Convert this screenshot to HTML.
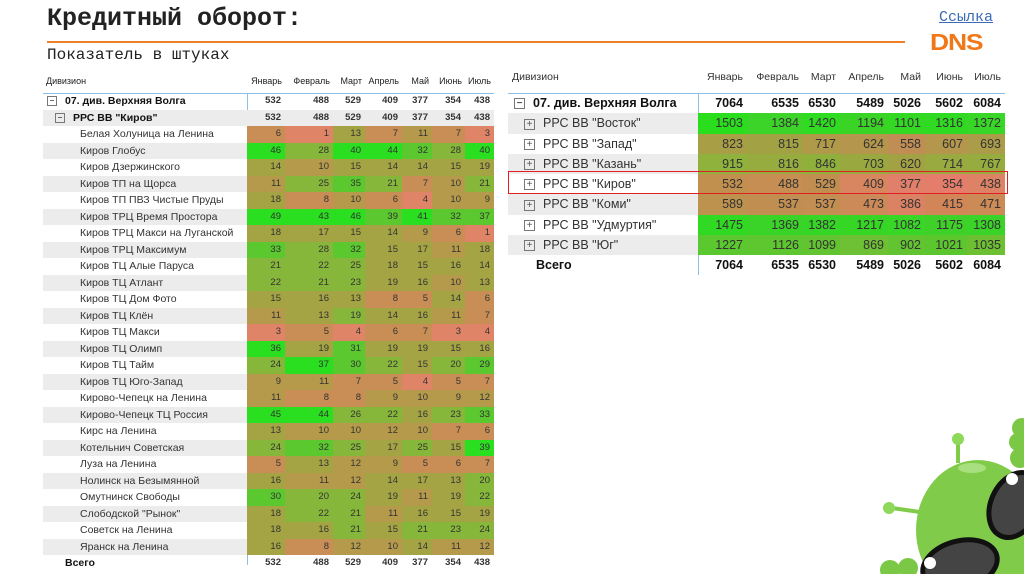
<!DOCTYPE html>
<html><head><meta charset="utf-8"><style>
body{margin:0;width:1024px;height:574px;background:#fff;position:relative;overflow:hidden;font-family:"Liberation Sans",sans-serif;}
.t1{position:absolute;left:47px;top:4px;font:bold 25px "Liberation Mono",monospace;color:#222;}
.t2{position:absolute;left:47px;top:46px;font:16px "Liberation Mono",monospace;color:#222;}
.ol{position:absolute;left:47px;top:41px;width:858px;height:2px;background:#f08028;}
.lnk{position:absolute;left:939px;top:9px;font:15px "Liberation Mono",monospace;color:#3a6ab8;text-decoration:underline;}
.dns{position:absolute;left:930px;top:29px;font:900 23px "Liberation Sans",sans-serif;color:#f07818;letter-spacing:-1px;transform:scaleX(1.15);transform-origin:left;}
table{border-collapse:collapse;position:absolute;table-layout:fixed;}
td{padding:0;white-space:nowrap;overflow:hidden;}
#L{left:43px;top:70px;font-size:10.5px;color:#333;}
#L td{height:16.5px;line-height:16.5px;}
#L td.n{text-align:right;padding-right:4px;color:#333;font-size:9.5px}
#L tr.h td{height:23px;font-size:9px;color:#222;text-align:right;padding-right:3px;line-height:23px}
#L tr.h td:first-child{text-align:left;padding-left:3px}
.g td:first-child{background:#ececec}
.b td{font-weight:bold;color:#111}
.a{background:#2ade20}.bb{background:#5ac82e}.c{background:#86b63a}.d{background:#a4a444}.e{background:#b69a4c}.f{background:#c88e56}.gg{background:#e08468}
#R{left:508px;top:62px;font-size:12.5px;color:#333;}
#R td{height:20.3px;line-height:20.3px;}
#R tr.h td{height:31px;font-size:10.5px;text-align:right;padding-right:4px}
#R tr.h td:first-child{text-align:left;padding-left:4px}
#R td.n{text-align:right;padding-right:4px}
.bx{display:inline-block;width:8px;height:8px;border:1px solid #777;font-size:8px;line-height:8px;text-align:center;vertical-align:middle;margin-right:8px;color:#555}
#R .bx{width:9px;height:9px;line-height:9px;font-size:10px}
</style></head><body>
<div class="t1">Кредитный оборот:</div>
<div class="ol"></div>
<div class="t2">Показатель в штуках</div>
<div class="lnk">Ссылка</div>
<div class="dns">DNS</div>

<div style="position:absolute;left:247px;top:93px;width:1px;height:472px;background:#8cc0e8"></div>
<div style="position:absolute;left:43px;top:93px;width:451px;height:1px;background:#8cc0e8"></div>
<table id="L">
<colgroup><col style="width:204px"><col style="width:38px"><col style="width:48px"><col style="width:32px"><col style="width:37px"><col style="width:30px"><col style="width:33px"><col style="width:29px"></colgroup>
<tr class="h"><td>Дивизион</td><td>Январь</td><td>Февраль</td><td>Март</td><td>Апрель</td><td>Май</td><td>Июнь</td><td>Июль</td></tr>
<tr class="b"><td style="padding-left:4px"><span class="bx">−</span>07. див. Верхняя Волга</td><td class="n">532</td><td class="n">488</td><td class="n">529</td><td class="n">409</td><td class="n">377</td><td class="n">354</td><td class="n">438</td></tr>
<tr class="b g" style="background:#ececec"><td style="padding-left:12px"><span class="bx">−</span>РРС ВВ "Киров"</td><td class="n">532</td><td class="n">488</td><td class="n">529</td><td class="n">409</td><td class="n">377</td><td class="n">354</td><td class="n">438</td></tr>
<tr><td style="padding-left:37px">Белая Холуница на Ленина</td><td class="n f">6</td><td class="n gg">1</td><td class="n d">13</td><td class="n f">7</td><td class="n e">11</td><td class="n f">7</td><td class="n gg">3</td></tr>
<tr class="g"><td style="padding-left:37px">Киров Глобус</td><td class="n a">46</td><td class="n c">28</td><td class="n a">40</td><td class="n a">44</td><td class="n bb">32</td><td class="n c">28</td><td class="n a">40</td></tr>
<tr><td style="padding-left:37px">Киров Дзержинского</td><td class="n d">14</td><td class="n e">10</td><td class="n d">15</td><td class="n d">14</td><td class="n d">14</td><td class="n d">15</td><td class="n d">19</td></tr>
<tr class="g"><td style="padding-left:37px">Киров ТП на Щорса</td><td class="n e">11</td><td class="n c">25</td><td class="n bb">35</td><td class="n c">21</td><td class="n f">7</td><td class="n e">10</td><td class="n c">21</td></tr>
<tr><td style="padding-left:37px">Киров ТП ПВЗ Чистые Пруды</td><td class="n d">18</td><td class="n f">8</td><td class="n e">10</td><td class="n f">6</td><td class="n gg">4</td><td class="n e">10</td><td class="n e">9</td></tr>
<tr class="g"><td style="padding-left:37px">Киров ТРЦ Время Простора</td><td class="n a">49</td><td class="n a">43</td><td class="n a">46</td><td class="n bb">39</td><td class="n a">41</td><td class="n bb">32</td><td class="n bb">37</td></tr>
<tr><td style="padding-left:37px">Киров ТРЦ Макси на Луганской</td><td class="n d">18</td><td class="n d">17</td><td class="n d">15</td><td class="n d">14</td><td class="n e">9</td><td class="n f">6</td><td class="n gg">1</td></tr>
<tr class="g"><td style="padding-left:37px">Киров ТРЦ Максимум</td><td class="n bb">33</td><td class="n c">28</td><td class="n bb">32</td><td class="n d">15</td><td class="n d">17</td><td class="n e">11</td><td class="n d">18</td></tr>
<tr><td style="padding-left:37px">Киров ТЦ Алые Паруса</td><td class="n c">21</td><td class="n c">22</td><td class="n c">25</td><td class="n d">18</td><td class="n d">15</td><td class="n d">16</td><td class="n d">14</td></tr>
<tr class="g"><td style="padding-left:37px">Киров ТЦ Атлант</td><td class="n c">22</td><td class="n c">21</td><td class="n c">23</td><td class="n d">19</td><td class="n d">16</td><td class="n e">10</td><td class="n d">13</td></tr>
<tr><td style="padding-left:37px">Киров ТЦ Дом Фото</td><td class="n d">15</td><td class="n d">16</td><td class="n d">13</td><td class="n f">8</td><td class="n f">5</td><td class="n d">14</td><td class="n f">6</td></tr>
<tr class="g"><td style="padding-left:37px">Киров ТЦ Клён</td><td class="n e">11</td><td class="n d">13</td><td class="n c">19</td><td class="n d">14</td><td class="n d">16</td><td class="n e">11</td><td class="n f">7</td></tr>
<tr><td style="padding-left:37px">Киров ТЦ Макси</td><td class="n gg">3</td><td class="n f">5</td><td class="n gg">4</td><td class="n f">6</td><td class="n f">7</td><td class="n gg">3</td><td class="n gg">4</td></tr>
<tr class="g"><td style="padding-left:37px">Киров ТЦ Олимп</td><td class="n a">36</td><td class="n d">19</td><td class="n bb">31</td><td class="n d">19</td><td class="n d">19</td><td class="n d">15</td><td class="n d">16</td></tr>
<tr><td style="padding-left:37px">Киров ТЦ Тайм</td><td class="n c">24</td><td class="n a">37</td><td class="n bb">30</td><td class="n c">22</td><td class="n d">15</td><td class="n c">20</td><td class="n bb">29</td></tr>
<tr class="g"><td style="padding-left:37px">Киров ТЦ Юго-Запад</td><td class="n e">9</td><td class="n e">11</td><td class="n f">7</td><td class="n f">5</td><td class="n gg">4</td><td class="n f">5</td><td class="n f">7</td></tr>
<tr><td style="padding-left:37px">Кирово-Чепецк на Ленина</td><td class="n e">11</td><td class="n f">8</td><td class="n f">8</td><td class="n e">9</td><td class="n e">10</td><td class="n e">9</td><td class="n e">12</td></tr>
<tr class="g"><td style="padding-left:37px">Кирово-Чепецк ТЦ Россия</td><td class="n a">45</td><td class="n a">44</td><td class="n c">26</td><td class="n c">22</td><td class="n d">16</td><td class="n c">23</td><td class="n bb">33</td></tr>
<tr><td style="padding-left:37px">Кирс на Ленина</td><td class="n d">13</td><td class="n e">10</td><td class="n e">10</td><td class="n e">12</td><td class="n e">10</td><td class="n f">7</td><td class="n f">6</td></tr>
<tr class="g"><td style="padding-left:37px">Котельнич Советская</td><td class="n c">24</td><td class="n bb">32</td><td class="n c">25</td><td class="n d">17</td><td class="n c">25</td><td class="n d">15</td><td class="n a">39</td></tr>
<tr><td style="padding-left:37px">Луза на Ленина</td><td class="n f">5</td><td class="n d">13</td><td class="n e">12</td><td class="n e">9</td><td class="n f">5</td><td class="n f">6</td><td class="n f">7</td></tr>
<tr class="g"><td style="padding-left:37px">Нолинск на Безымянной</td><td class="n d">16</td><td class="n e">11</td><td class="n e">12</td><td class="n d">14</td><td class="n d">17</td><td class="n d">13</td><td class="n c">20</td></tr>
<tr><td style="padding-left:37px">Омутнинск Свободы</td><td class="n bb">30</td><td class="n c">20</td><td class="n c">24</td><td class="n d">19</td><td class="n e">11</td><td class="n d">19</td><td class="n c">22</td></tr>
<tr class="g"><td style="padding-left:37px">Слободской "Рынок"</td><td class="n d">18</td><td class="n c">22</td><td class="n c">21</td><td class="n e">11</td><td class="n d">16</td><td class="n d">15</td><td class="n d">19</td></tr>
<tr><td style="padding-left:37px">Советск на Ленина</td><td class="n d">18</td><td class="n d">16</td><td class="n c">21</td><td class="n d">15</td><td class="n c">21</td><td class="n c">23</td><td class="n c">24</td></tr>
<tr class="g"><td style="padding-left:37px">Яранск на Ленина</td><td class="n d">16</td><td class="n f">8</td><td class="n e">12</td><td class="n e">10</td><td class="n d">14</td><td class="n e">11</td><td class="n e">12</td></tr>
<tr class="b"><td style="padding-left:22px">Всего</td><td class="n">532</td><td class="n">488</td><td class="n">529</td><td class="n">409</td><td class="n">377</td><td class="n">354</td><td class="n">438</td></tr>
</table>

<div style="position:absolute;left:698px;top:93px;width:1px;height:182px;background:#8cc0e8"></div>
<div style="position:absolute;left:508px;top:93px;width:497px;height:1px;background:#8cc0e8"></div>
<table id="R">
<colgroup><col style="width:190px"><col style="width:49px"><col style="width:56px"><col style="width:37px"><col style="width:48px"><col style="width:37px"><col style="width:42px"><col style="width:38px"></colgroup>
<tr class="h"><td>Дивизион</td><td>Январь</td><td>Февраль</td><td>Март</td><td>Апрель</td><td>Май</td><td>Июнь</td><td>Июль</td></tr>
<tr class="b"><td style="padding-left:6px"><span class="bx">−</span>07. див. Верхняя Волга</td><td class="n">7064</td><td class="n">6535</td><td class="n">6530</td><td class="n">5489</td><td class="n">5026</td><td class="n">5602</td><td class="n">6084</td></tr>
<tr class="g"><td style="padding-left:16px"><span class="bx">+</span>РРС ВВ "Восток"</td><td class="n" style="background:#2ade1e">1503</td><td class="n" style="background:#3cd428">1384</td><td class="n" style="background:#30dc22">1420</td><td class="n" style="background:#3ad426">1194</td><td class="n" style="background:#32d822">1101</td><td class="n" style="background:#30da22">1316</td><td class="n" style="background:#38d626">1372</td></tr>
<tr><td style="padding-left:16px"><span class="bx">+</span>РРС ВВ "Запад"</td><td class="n" style="background:#a89e46">823</td><td class="n" style="background:#a2a244">815</td><td class="n" style="background:#b09a4a">717</td><td class="n" style="background:#b4964c">624</td><td class="n" style="background:#c08e54">558</td><td class="n" style="background:#b4964c">607</td><td class="n" style="background:#aa9c48">693</td></tr>
<tr class="g"><td style="padding-left:16px"><span class="bx">+</span>РРС ВВ "Казань"</td><td class="n" style="background:#8eb23c">915</td><td class="n" style="background:#96ac3e">816</td><td class="n" style="background:#90b03c">846</td><td class="n" style="background:#9aa840">703</td><td class="n" style="background:#a2a244">620</td><td class="n" style="background:#98aa40">714</td><td class="n" style="background:#96ac3e">767</td></tr>
<tr><td style="padding-left:16px"><span class="bx">+</span>РРС ВВ "Киров"</td><td class="n" style="background:#c2904e">532</td><td class="n" style="background:#c68e52">488</td><td class="n" style="background:#c28e50">529</td><td class="n" style="background:#d88660">409</td><td class="n" style="background:#e0806a">377</td><td class="n" style="background:#e47e6a">354</td><td class="n" style="background:#de8266">438</td></tr>
<tr class="g"><td style="padding-left:16px"><span class="bx">+</span>РРС ВВ "Коми"</td><td class="n" style="background:#bc924e">589</td><td class="n" style="background:#c08e50">537</td><td class="n" style="background:#c28e52">537</td><td class="n" style="background:#cc8a58">473</td><td class="n" style="background:#dc8264">386</td><td class="n" style="background:#d28658">415</td><td class="n" style="background:#cc8a56">471</td></tr>
<tr><td style="padding-left:16px"><span class="bx">+</span>РРС ВВ "Удмуртия"</td><td class="n" style="background:#30da22">1475</td><td class="n" style="background:#3ad428">1369</td><td class="n" style="background:#36d626">1382</td><td class="n" style="background:#36d624">1217</td><td class="n" style="background:#38d626">1082</td><td class="n" style="background:#40d02a">1175</td><td class="n" style="background:#3ad428">1308</td></tr>
<tr class="g"><td style="padding-left:16px"><span class="bx">+</span>РРС ВВ "Юг"</td><td class="n" style="background:#5ac82e">1227</td><td class="n" style="background:#5ec62e">1126</td><td class="n" style="background:#62c430">1099</td><td class="n" style="background:#6ec034">869</td><td class="n" style="background:#62c430">902</td><td class="n" style="background:#5cc62e">1021</td><td class="n" style="background:#6cc032">1035</td></tr>
<tr class="b"><td style="padding-left:28px">Всего</td><td class="n">7064</td><td class="n">6535</td><td class="n">6530</td><td class="n">5489</td><td class="n">5026</td><td class="n">5602</td><td class="n">6084</td></tr>
</table>
<div style="position:absolute;left:508px;top:171px;width:500px;height:23px;border:1.5px solid #e02020;box-sizing:border-box"></div>

<svg style="position:absolute;left:850px;top:380px" width="174" height="194" viewBox="0 0 174 194">
<g fill="#7ac846">
<circle cx="172" cy="48" r="10"/><circle cx="168" cy="62" r="9"/><circle cx="170" cy="78" r="10"/>
<circle cx="40" cy="190" r="10"/><circle cx="58" cy="188" r="10"/>
</g>
<ellipse cx="128" cy="150" rx="62" ry="70" fill="#80cc4a"/>
<path d="M108 83 L108 62" stroke="#80cc4a" stroke-width="4"/><circle cx="108" cy="59" r="6" fill="#8ed85a"/>
<path d="M70 132 L42 128" stroke="#80cc4a" stroke-width="4"/><circle cx="39" cy="128" r="6" fill="#8ed85a"/>
<ellipse cx="122" cy="88" rx="14" ry="5" fill="#a8e080"/>
<ellipse cx="165" cy="125" rx="24" ry="34" fill="#444" stroke="#111" stroke-width="5" transform="rotate(25 165 125)"/>
<circle cx="162" cy="99" r="6" fill="#fff"/>
<ellipse cx="110" cy="185" rx="38" ry="24" fill="#444" stroke="#111" stroke-width="5" transform="rotate(-15 110 185)"/>
<circle cx="80" cy="183" r="6" fill="#fff"/>
</svg>
</body></html>
